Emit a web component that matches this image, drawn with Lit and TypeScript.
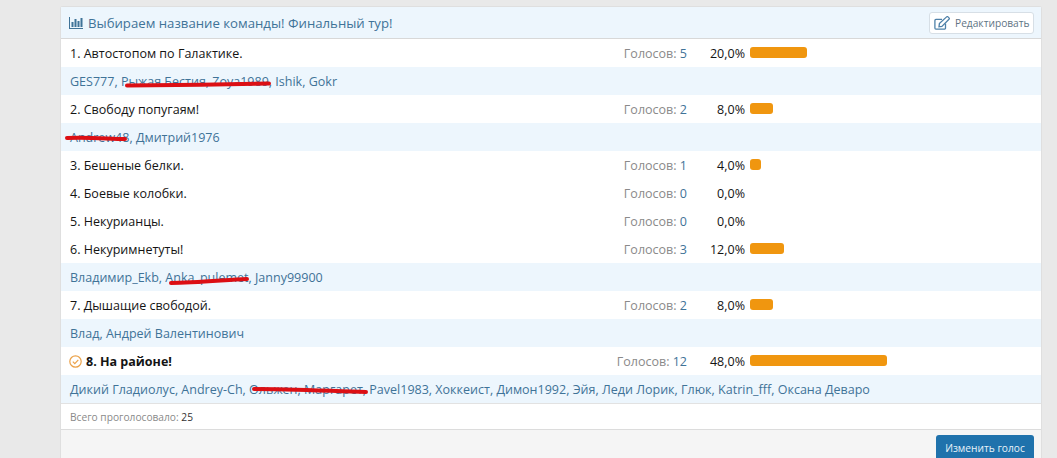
import { LitElement, html, css, svg } from "lit";
import { customElement } from "lit/decorators.js";

type Row = { label: string; votes: number; pct: string; w: number; voters?: string; mine?: boolean };

const rows: Row[] = [
  { label: "1. Автостопом по Галактике.", votes: 5, pct: "20,0%", w: 20, voters: "GES777, Рыжая Бестия, Zoya1989, Ishik, Gokr" },
  { label: "2. Свободу попугаям!", votes: 2, pct: "8,0%", w: 8, voters: "Andrew48, Дмитрий1976" },
  { label: "3. Бешеные белки.", votes: 1, pct: "4,0%", w: 4 },
  { label: "4. Боевые колобки.", votes: 0, pct: "0,0%", w: 0 },
  { label: "5. Некурианцы.", votes: 0, pct: "0,0%", w: 0 },
  { label: "6. Некуримнетуты!", votes: 3, pct: "12,0%", w: 12, voters: "Владимир_Ekb, Anka_pulemet, Janny99900" },
  { label: "7. Дышащие свободой.", votes: 2, pct: "8,0%", w: 8, voters: "Влад, Андрей Валентинович" },
  { label: "8. На районе!", votes: 12, pct: "48,0%", w: 48, mine: true, voters: "Дикий Гладиолус, Andrey-Ch, Ольжен, Маргарет, Pavel1983, Хоккеист, Димон1992, Эйя, Леди Лорик, Глюк, Katrin_fff, Оксана Деваро" },
];

@customElement("app-root")
export class AppRoot extends LitElement {
  static styles = css`
    :host {
      display: block;
      position: relative;
      height: 458px;
      overflow: hidden;
      background: #e9e9e9;
      padding: 6px 15px 0 60px;
      box-sizing: border-box;
      font-family: "Open Sans", "Noto Sans", sans-serif;
      font-size: 12.53px;
      color: #141414;
    }
    .panel {
      background: #fff;
      border: 1px solid #dfdfdf;
      border-bottom: 0;
      border-radius: 3px 3px 0 0;
      box-sizing: border-box;
      height: 460px;
    }
    .head {
      height: 32px;
      background: #edf6fd;
      border-bottom: 1px solid #d8d8d8;
      display: flex;
      align-items: center;
      justify-content: space-between;
      padding: 0 7px 0 8px;
      box-sizing: border-box;
    }
    .title {
      display: flex;
      align-items: center;
      gap: 5px;
      font-size: 13.2px;
      color: #3f7398;
    }
    .edit {
      display: flex;
      align-items: center;
      gap: 5px;
      height: 22px;
      width: 105px;
      padding: 0 4px;
      background: #fff;
      border: 1px solid #d7dfe6;
      border-radius: 3px;
      font-size: 10.2px;
      color: #5f7484;
      box-sizing: border-box;
      white-space: nowrap;
    }
    .edit svg { flex: none; }
    .row {
      height: 28px;
      display: flex;
      align-items: center;
      padding: 0 0 0 9px;
    }
    .label { flex: 1; min-width: 0; display: flex; align-items: center; gap: 4px; }
    .label svg { margin-left: -1px; }
    .mine { font-weight: 700; }
    .votes { color: #8a8a8a; width: 80px; text-align: right; white-space: nowrap; }
    .votes b { font-weight: 400; color: #3f7398; }
    .pct { width: 58px; text-align: right; }
    .track { width: 285px; margin: 0 6px 0 5px; height: 11px; position: relative; top: -1px; }
    .bar { height: 11px; background: #f0960f; border-radius: 3px; }
    .voters {
      height: 28px;
      line-height: 29px;
      padding-left: 9px;
      background: #edf6fd;
      color: #3f7398;
      white-space: nowrap;
    }
    .total {
      height: 27px;
      line-height: 26px;
      border-top: 1px solid #e2e2e2;
      border-bottom: 1px solid #dcdcdc;
      padding-left: 9px;
      font-size: 10.2px;
      color: #8a8a8a;
      box-sizing: border-box;
    }
    .total b { font-weight: 400; color: #333; }
    .foot {
      background: #f5f5f5;
      height: 40px;
      display: flex;
      justify-content: flex-end;
      padding: 5px 7px 0 0;
      box-sizing: border-box;
    }
    .btn {
      width: 98px;
      height: 30px;
      line-height: 26px;
      background: #1f72ac;
      color: #e8f2f9;
      border-radius: 3px 3px 0 0;
      text-align: center;
      font-size: 10.2px;
    }
    .marks { position: absolute; left: 0; top: 0; pointer-events: none; }
  `;

  private chartIcon() {
    return html`<svg width="14" height="12" viewBox="0 0 14 12" fill="#3f7398">
      <path d="M0 0h1v11h13v1H0z" />
      <rect x="2.5" y="5" width="2" height="5" />
      <rect x="5.5" y="2" width="2" height="8" />
      <rect x="8.5" y="4" width="2" height="6" />
      <rect x="11.5" y="1" width="2" height="9" />
    </svg>`;
  }

  private editIcon() {
    return html`<svg width="16" height="14" viewBox="0 0 16 14" fill="none" stroke="#4f81a8" stroke-width="1.3">
      <path d="M11.5 7.5V12a1.2 1.2 0 0 1-1.2 1.2H2A1.2 1.2 0 0 1 .9 12V4.6A1.2 1.2 0 0 1 2 3.4h6" />
      <path d="M5.4 7.6 12.6 .9a1 1 0 0 1 1.4 0l1 1a1 1 0 0 1 0 1.4L7.9 10.400l-2.900.4z" />
    </svg>`;
  }

  private checkIcon() {
    return html`<svg width="13" height="13" viewBox="0 0 13 13" fill="none" stroke="#eba24a" stroke-width="1.2">
      <circle cx="6.500" cy="6.500" r="5.700" />
      <path d="M3.800 6.600 5.800 8.600 9.300 4.800" />
    </svg>`;
  }

  render() {
    return html`
      <div class="panel">
        <div class="head">
          <div class="title">${this.chartIcon()}<span>Выбираем название команды! Финальный тур!</span></div>
          <div class="edit">${this.editIcon()}<span>Редактировать</span></div>
        </div>
        ${rows.map(
          (r) => html`
            <div class="row">
              <div class="label ${r.mine ? "mine" : ""}">
                ${r.mine ? this.checkIcon() : ""}<span>${r.label}</span>
              </div>
              <div class="votes">Голосов: <b>${r.votes}</b></div>
              <div class="pct">${r.pct}</div>
              <div class="track">
                ${r.w > 0 ? html`<div class="bar" style="width:${r.w}%"></div>` : ""}
              </div>
            </div>
            ${r.voters ? html`<div class="voters">${r.voters}</div>` : ""}
          `
        )}
        <div class="total">Всего проголосовало: <b>25</b></div>
        <div class="foot"><div class="btn">Изменить голос</div></div>
      </div>
      <svg class="marks" width="1057" height="458" fill="none" stroke="#dc0f14" stroke-width="4" stroke-linecap="round">
        ${svg`<path d="M127 85.500C170 85 225 84.500 269 83.500" />`}
        ${svg`<path d="M67 138C90 137 110 139 125 139" />`}
        ${svg`<path d="M171 283C195 283 225 280 247 279" />`}
        ${svg`<path d="M254 389C290 389 330 391 366 392" />`}
      </svg>
    `;
  }
}
